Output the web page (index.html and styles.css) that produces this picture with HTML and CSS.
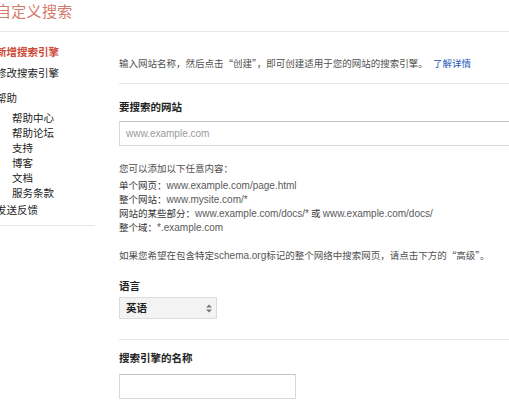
FILE: index.html
```html
<!DOCTYPE html>
<html lang="zh-CN">
<head>
<meta charset="utf-8">
<title>自定义搜索</title>
<link rel="stylesheet" href="styles.css">
</head>
<body>
<div class="page">
  <header class="header">
    <h1 class="title">自定义搜索</h1>
  </header>
  <div class="layout">
    <nav class="nav">
      <div class="nav-item active">新增搜索引擎</div>
      <div class="nav-item second">修改搜索引擎</div>
      <div class="nav-item group">帮助</div>
      <ul class="sub">
        <li>帮助中心</li>
        <li>帮助论坛</li>
        <li>支持</li>
        <li>博客</li>
        <li>文档</li>
        <li>服务条款</li>
      </ul>
      <div class="nav-item feedback">发送反馈</div>
    </nav>
    <main class="main">
      <p class="intro">输入网站名称，然后点击“创建”，即可创建适用于您的网站的搜索引擎。 <a class="link" href="#">了解详情</a></p>
      <section class="section">
        <h2 class="label">要搜索的网站</h2>
        <div class="input wide"><span class="placeholder">www.example.com</span></div>
        <p class="hint">您可以添加以下任意内容：</p>
        <ul class="examples">
          <li>单个网页：<span class="url">www.example.com/page.html</span></li>
          <li>整个网站：<span class="url">www.mysite.com/*</span></li>
          <li>网站的某些部分：<span class="url">www.example.com/docs/*</span> 或 <span class="url">www.example.com/docs/</span></li>
          <li>整个域：<span class="url">*.example.com</span></li>
        </ul>
        <p class="advanced">如果您希望在包含特定<span class="url">schema.org</span>标记的整个网络中搜索网页，请点击下方的“高级”。</p>
        <h2 class="label lang-label">语言</h2>
        <div class="select">
          <span>英语</span>
          <svg class="arrows" width="6" height="9" viewBox="0 0 6 9"><path d="M0 3.5 L3 0.5 L6 3.5 Z M0 5.5 L3 8.5 L6 5.5 Z" fill="#777"/></svg>
        </div>
      </section>
      <section class="section name-section">
        <h2 class="label">搜索引擎的名称</h2>
        <div class="input short"></div>
      </section>
    </main>
  </div>
</div>
</body>
</html>
```

FILE: styles.css
```css
html, body {
  margin: 0;
  padding: 0;
  overflow: hidden;
  background: #fff;
}

body {
  font-family: "Liberation Sans", "Noto Sans CJK SC", sans-serif;
  color: #444;
}

.page {
  width: 540px;
}

.header {
  height: 31px;
  border-bottom: 1px solid #e8e8e8;
}

.title {
  margin: 0 0 0 -4px;
  font-family: "Noto Sans CJK SC", sans-serif;
  font-size: 15px;
  font-weight: normal;
  line-height: 22px;
  color: #d47a6b;
  letter-spacing: 0.3px;
}

.layout {
  display: flex;
  align-items: flex-start;
}

.nav {
  width: 99px;
  margin-left: -4px;
  padding-top: 12px;
  padding-bottom: 8px;
  border-bottom: 1px solid #e8e8e8;
  font-family: "Noto Sans CJK SC", sans-serif;
  font-size: 10.5px;
  line-height: 15px;
  color: #222;
}

.nav-item.active {
  color: #cc4a37;
  font-weight: bold;
}

.nav-item.second {
  margin-top: 6px;
}

.nav-item.group {
  margin-top: 10px;
}

.sub {
  list-style: none;
  margin: 5px 0 0 0;
  padding: 0 0 0 16px;
}

.sub li {
  height: 15px;
}

.nav-item.feedback {
  margin-top: 2px;
}

.main {
  margin-left: 24px;
  padding-top: 24px;
  flex: 1;
  font-family: "Noto Sans CJK SC", sans-serif;
  font-size: 9.5px;
  line-height: 14px;
  color: #505050;
}

.intro {
  margin: 0;
  padding-bottom: 13px;
  border-bottom: 1px solid #e8e8e8;
}

.link {
  color: #1a55b8;
  text-decoration: none;
  margin-left: 3px;
}

.url {
  font-family: "Liberation Sans", sans-serif;
  font-size: 10px;
  line-height: 1;
  color: #5a5a5a;
}

.label {
  margin: 16px 0 0 0;
  font-size: 10.5px;
  line-height: 14px;
  font-weight: bold;
  color: #222;
}

.input {
  box-sizing: border-box;
  height: 25px;
  margin-top: 7px;
  border: 1px solid #d9d9d9;
  border-top-color: #c4c4c4;
  background: #fff;
  display: flex;
  align-items: center;
  padding-left: 6px;
}

.input.wide {
  width: 420px;
}

.input.short {
  width: 177px;
  margin-top: 9px;
}

.placeholder {
  font-family: "Liberation Sans", sans-serif;
  font-size: 10px;
  color: #9a9a9a;
}

.hint {
  margin: 15px 0 0 0;
  height: 14px;
}

.examples {
  list-style: none;
  margin: 3px 0 0 0;
  padding: 0;
  color: #333;
}

.examples li {
  height: 14px;
}

.advanced {
  margin: 14px 0 0 0;
  height: 14px;
}

.lang-label {
  margin-top: 17px;
}

.select {
  box-sizing: border-box;
  width: 98px;
  height: 22px;
  margin-top: 4px;
  border: 1px solid #dcdcdc;
  background: #f3f3f3;
  display: flex;
  align-items: center;
  justify-content: space-between;
  padding: 0 4px 0 6px;
  font-size: 10.5px;
  color: #222;
  font-weight: bold;
}

.arrows {
  display: block;
}

.section {
  padding-bottom: 20px;
}

.section:first-of-type {
  border-bottom: 1px solid #e8e8e8;
}

.name-section .label {
  margin-top: 11px;
}
```
